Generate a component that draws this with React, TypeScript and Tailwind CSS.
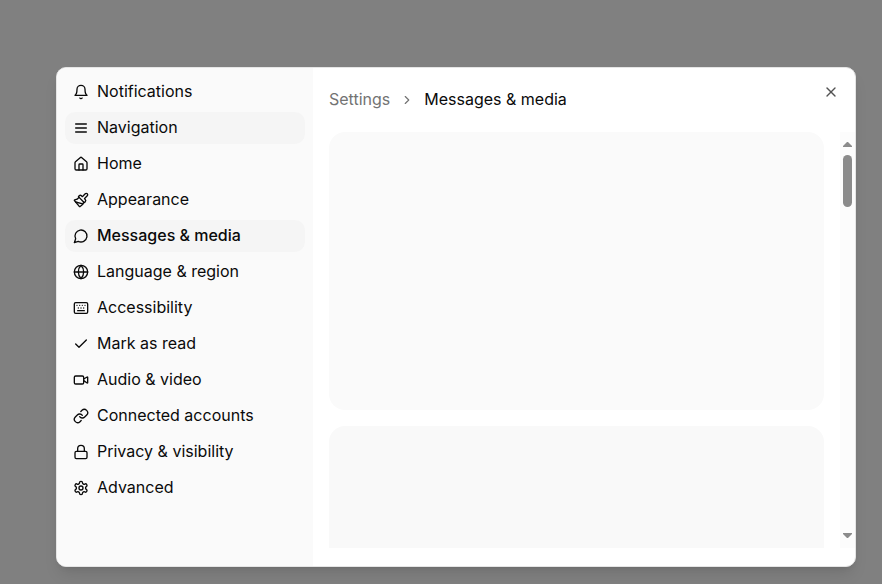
import type { ComponentType, ReactNode } from "react";
import { Check, ChevronRight, Globe, House, Keyboard, Link, Lock, Paintbrush, Video, X } from "lucide-react";
import clsx from "clsx";

type IconProps = { size?: number; className?: string };

function Outline({ size = 16, className, children }: IconProps & { children: ReactNode }) {
  return (
    <svg
      width={size}
      height={size}
      viewBox="0 0 24 24"
      fill="none"
      stroke="currentColor"
      strokeWidth="2"
      strokeLinecap="round"
      strokeLinejoin="round"
      aria-hidden="true"
      className={className}
    >
      {children}
    </svg>
  );
}

function BellIcon(props: IconProps) {
  return (
    <Outline {...props}>
      <path d="M6 8a6 6 0 0 1 12 0c0 7 3 9 3 9H3s3-2 3-9" />
      <path d="M10.3 21a1.94 1.94 0 0 0 3.4 0" />
    </Outline>
  );
}

function MenuIcon(props: IconProps) {
  return (
    <Outline {...props}>
      <path d="M4 12h16M4 6h16M4 18h16" />
    </Outline>
  );
}

function MessageIcon(props: IconProps) {
  return (
    <Outline {...props}>
      <path d="M7.9 20A9 9 0 1 0 4 16.1L2 22Z" />
    </Outline>
  );
}

function GearIcon(props: IconProps) {
  return (
    <Outline {...props}>
      <path d="M12.22 2h-.44a2 2 0 0 0-2 2v.18a2 2 0 0 1-1 1.73l-.43.25a2 2 0 0 1-2 0l-.15-.08a2 2 0 0 0-2.73.73l-.22.38a2 2 0 0 0 .73 2.73l.15.1a2 2 0 0 1 1 1.72v.51a2 2 0 0 1-1 1.74l-.15.09a2 2 0 0 0-.73 2.73l.22.38a2 2 0 0 0 2.73.73l.15-.08a2 2 0 0 1 2 0l.43.25a2 2 0 0 1 1 1.73V20a2 2 0 0 0 2 2h.44a2 2 0 0 0 2-2v-.18a2 2 0 0 1 1-1.73l.43-.25a2 2 0 0 1 2 0l.15.08a2 2 0 0 0 2.73-.73l.22-.39a2 2 0 0 0-.73-2.73l-.15-.08a2 2 0 0 1-1-1.74v-.5a2 2 0 0 1 1-1.74l.15-.09a2 2 0 0 0 .73-2.73l-.22-.38a2 2 0 0 0-2.73-.73l-.15.08a2 2 0 0 1-2 0l-.43-.25a2 2 0 0 1-1-1.73V4a2 2 0 0 0-2-2z" />
      <circle cx="12" cy="12" r="3" />
    </Outline>
  );
}

type Item = { name: string; icon: ComponentType<IconProps>; hovered?: boolean; active?: boolean };

const items: Item[] = [
  { name: "Notifications", icon: BellIcon },
  { name: "Navigation", icon: MenuIcon, hovered: true },
  { name: "Home", icon: House },
  { name: "Appearance", icon: Paintbrush },
  { name: "Messages & media", icon: MessageIcon, active: true },
  { name: "Language & region", icon: Globe },
  { name: "Accessibility", icon: Keyboard },
  { name: "Mark as read", icon: Check },
  { name: "Audio & video", icon: Video },
  { name: "Connected accounts", icon: Link },
  { name: "Privacy & visibility", icon: Lock },
  { name: "Advanced", icon: GearIcon },
];

function Sidebar() {
  return (
    <nav aria-label="Settings sections" className="w-64 shrink-0 bg-[#fafafa] p-2">
      <ul className="flex flex-col gap-1">
        {items.map(({ name, icon: Icon, hovered, active }) => (
          <li key={name}>
            <a
              href="#"
              aria-current={active ? "page" : undefined}
              className={clsx(
                "flex h-8 items-center gap-2 rounded-[10px] px-2 text-base",
                (hovered || active) && "bg-neutral-100",
                active && "font-medium",
              )}
            >
              <Icon size={16} className="shrink-0" />
              <span className="pb-0.5">{name}</span>
            </a>
          </li>
        ))}
      </ul>
    </nav>
  );
}

function Scrollbar() {
  return (
    <div aria-hidden="true" className="flex w-[15px] shrink-0 flex-col items-center justify-between bg-[#fcfcfc] py-2">
      <div className="flex flex-col items-center gap-2">
        <svg width="9" height="7" viewBox="0 0 9 7" fill="#8b8b8b">
          <path d="M4 2h1l4 4v1H0V6z" />
        </svg>
        <div className="h-[52px] w-[9px] rounded-full bg-[#8b8b8b]" />
      </div>
      <svg width="9" height="7" viewBox="0 0 9 7" fill="#8b8b8b">
        <path d="M0 0h9v1L5 5H4L0 1z" />
      </svg>
    </div>
  );
}

export default function App() {
  return (
    <div className="flex h-screen bg-[#808080] pt-[67px] pr-[26px] pb-[17px] pl-14 font-['Inter','Liberation_Sans',sans-serif] text-[#0a0a0a]">
      <div
        role="dialog"
        aria-label="Settings"
        className="relative flex min-w-0 flex-1 overflow-hidden rounded-[10px] border border-[#e5e5e5] bg-white shadow-lg"
      >
        <Sidebar />
        <main className="flex min-w-0 flex-1 flex-col pb-[18px]">
          <header className="flex h-16 shrink-0 items-center px-4">
            <nav aria-label="Breadcrumb">
              <ol className="flex items-center gap-2.5 text-base">
                <li className="pb-0.5 text-[#737373]">
                  <a href="#">Settings</a>
                </li>
                <li aria-hidden="true" className="text-[#737373]">
                  <ChevronRight size={14} />
                </li>
                <li aria-current="page" className="pb-0.5">
                  Messages &amp; media
                </li>
              </ol>
            </nav>
          </header>
          <div className="flex min-h-0 flex-1">
            <div className="flex min-w-0 flex-1 flex-col gap-4 overflow-hidden px-4">
              <div className="aspect-video shrink-0 rounded-2xl bg-[#fafafa]" />
              <div className="aspect-video shrink-0 rounded-2xl bg-[#f9f9f9]" />
            </div>
            <Scrollbar />
          </div>
        </main>
        <button type="button" aria-label="Close" className="absolute top-4 right-4 opacity-70">
          <X size={16} />
        </button>
      </div>
    </div>
  );
}
